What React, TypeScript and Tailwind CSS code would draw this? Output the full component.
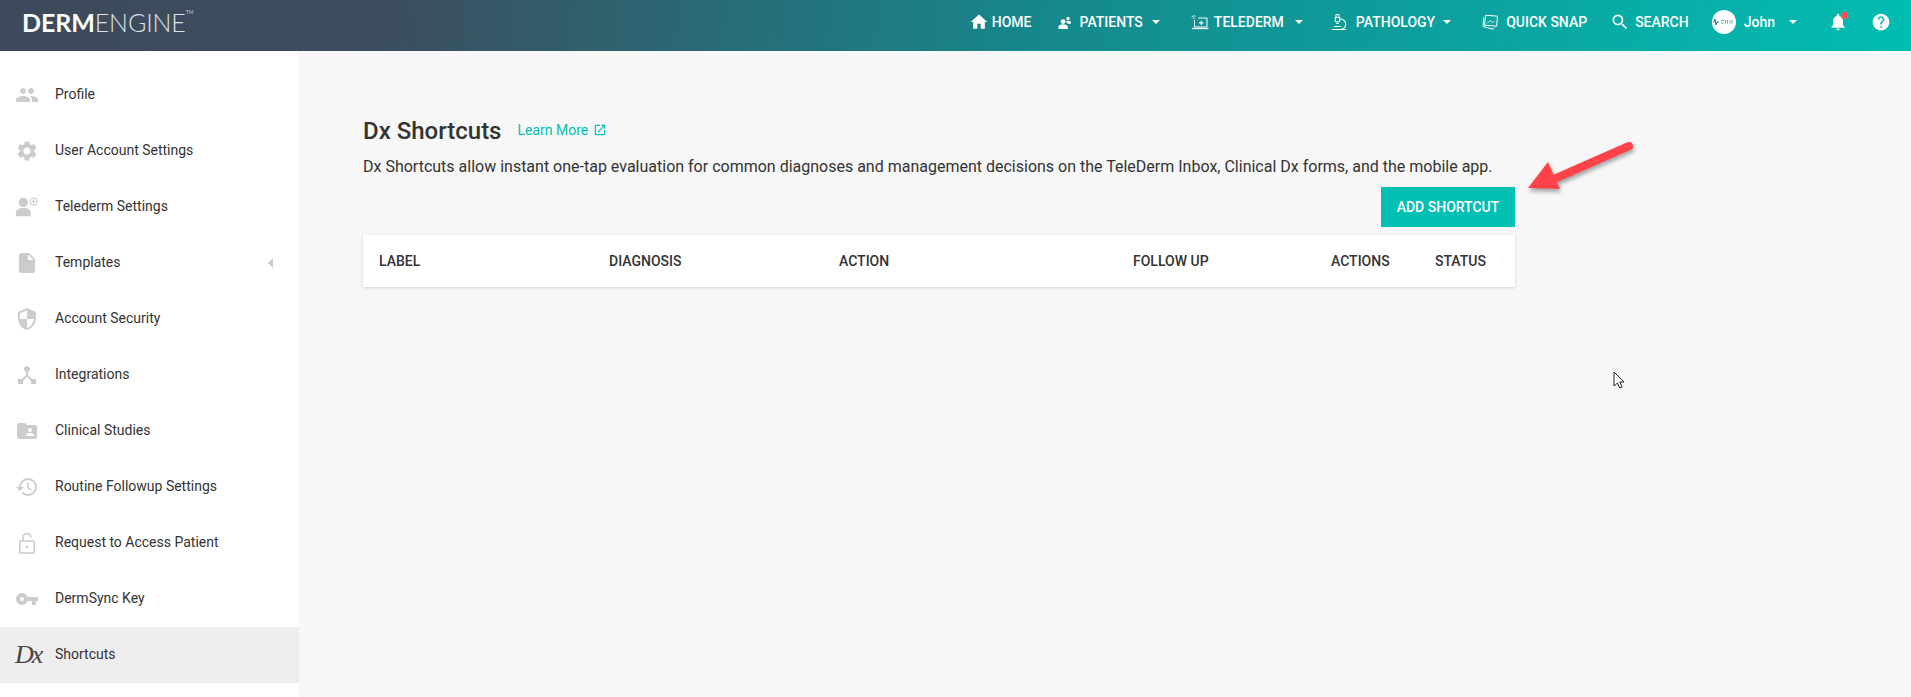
import { Microscope } from "lucide-react";
import {
  MdDeviceHub,
  MdFolderShared,
  MdHelp,
  MdHistory,
  MdHome,
  MdInsertDriveFile,
  MdNotifications,
  MdOpenInNew,
  MdPeople,
  MdSearch,
  MdSecurity,
  MdSettings,
  MdVpnKey,
} from "react-icons/md";

function TeledermSettingsIcon() {
  return (
    <svg viewBox="0 0 26 22" className="w-[26px] h-[22px]" fill="#ccc">
      <circle cx="9" cy="6" r="5" />
      <path d="M1 21v-4c0-3 3-5 8-5s8 2 8 5v4z" />
      <circle cx="20" cy="5" r="3.7" fill="none" stroke="#ccc" strokeWidth="1.1" />
      <path d="M19.400 3h1.200v1.400H22v1.200h-1.400V7h-1.200V5.600H18V4.400h1.400z" />
    </svg>
  );
}

function LockIcon() {
  return (
    <svg viewBox="0 0 24 24" className="w-6 h-6" fill="none" stroke="#ccc" strokeWidth="1.6">
      <path d="M8 10V6.500a4 4 0 0 1 8 0" />
      <rect x="4.800" y="10" width="14.400" height="12" rx="1" />
      <circle cx="12" cy="16" r="1.300" fill="#ccc" stroke="none" />
    </svg>
  );
}

function DxIcon() {
  return (
    <span className="w-6 text-center font-['Liberation_Serif',serif] italic text-[26px] leading-6 tracking-[-2px] text-[#444]">
      Dx
    </span>
  );
}

function PatientsIcon() {
  return (
    <svg viewBox="0 0 14 14" className="w-[13px] h-[13px]" fill="#fff">
      <circle cx="5.500" cy="6" r="2.600" />
      <path d="M0.500 14v-2.400c0-1.600 2.200-2.600 5-2.600s5 1 5 2.600V14z" />
      <circle cx="10.800" cy="2.600" r="1.800" />
      <path d="M9 5.400c.6-.3 1.200-.4 1.900-.4 1.600 0 3 .7 3 1.900V8.400h-3.300C10 7.600 9.500 7.200 9 7z" />
    </svg>
  );
}

function TeledermIcon() {
  return (
    <svg viewBox="0 0 18 16" className="w-[18px] h-4" fill="none" stroke="#fff" strokeWidth="1">
      <path d="M3.500 6v7h12.500V4H7" />
      <path d="M1 14.500h16.500" strokeWidth="1.300" />
      <path d="M9.700 6.700h1.100v1.600h1.600v1.100h-1.600V11H9.700V9.400H8.100V8.300h1.600z" fill="#fff" stroke="none" />
      <path d="M.6 2.800A3.500 3.500 0 0 1 4.500 2.200M1.700 4.600A2 2 0 0 1 3.500 4" strokeWidth=".9" />
    </svg>
  );
}

function PhotosIcon() {
  return (
    <svg viewBox="0 0 16 16" className="w-4 h-4" fill="none" stroke="#fff" strokeWidth="1">
      <path d="M3.500 1.200l12 1-.9 10-12-1z" />
      <path d="M1.800 3.500L1 12.500l10 2.700 1.400-1.500" />
      <path d="M5 9.500l3-3 2.500 2 2-1.500" strokeWidth=".8" />
    </svg>
  );
}

function Avatar() {
  return (
    <span className="relative w-6 h-6 rounded-full bg-white flex items-center justify-center overflow-hidden">
      <svg viewBox="0 0 24 24" className="w-6 h-6" fill="none" stroke="#5fb8ae" strokeWidth="1">
        <path d="M1 12h1l1-3 1 6 1-3h2" stroke="#2f6f70" />
        <path d="M9 10.500h3M9 13h3M13.500 10v3.500M15.500 10v3.500M18 10v3.500M20 10v3.500" />
      </svg>
    </span>
  );
}

function Caret({ className }: { className: string }) {
  return (
    <svg viewBox="0 0 8 4" className={`w-2 h-1 ${className}`} fill="#fff">
      <path d="M0 0h8L4 4z" />
    </svg>
  );
}

function Header() {
  return (
    <header className="h-[51px] pb-[7px] flex items-center text-white bg-[linear-gradient(96deg,#3d4a5c_0%,#3c4d5f_20%,#15898d_55%,#02bdb2_100%)] font-['Roboto',sans-serif]">
      <div className="ml-[22px] flex font-['Lato',sans-serif] text-[25px] leading-none tracking-[-0.1px]">
        <span className="font-bold">DERM</span>
        <span className="font-light text-[#dfe3e6]">ENGINE</span>
        <span className="text-[5px] font-bold text-[#aab]">TM</span>
      </div>
      <nav className="ml-auto mr-5 flex items-center text-sm font-medium">
        <MdHome className="w-5 h-5 mr-[3px]" />
        <span>HOME</span>
        <span className="ml-[27px]"><PatientsIcon /></span>
        <span className="ml-2">PATIENTS</span>
        <Caret className="ml-[9px]" />
        <span className="ml-[31px]"><TeledermIcon /></span>
        <span className="ml-[5px]">TELEDERM</span>
        <Caret className="ml-[11px]" />
        <Microscope className="ml-[27px] w-[18px] h-[18px]" strokeWidth={1.5} />
        <span className="ml-2">PATHOLOGY</span>
        <Caret className="ml-2" />
        <span className="ml-[31px]"><PhotosIcon /></span>
        <span className="ml-2">QUICK SNAP</span>
        <MdSearch className="ml-[23px] w-[20px] h-[20px]" />
        <span className="ml-[5px]">SEARCH</span>
        <span className="ml-[23px]"><Avatar /></span>
        <span className="ml-2">John</span>
        <Caret className="ml-[14px]" />
        <span className="relative ml-[31px]">
          <MdNotifications className="w-[20px] h-[20px]" />
          <span className="absolute top-0 right-0 w-[7px] h-[7px] rounded-full bg-[#ff5252]" />
        </span>
        <MdHelp className="ml-[23px] w-[20px] h-[20px]" />
      </nav>
    </header>
  );
}

const ICON_CLASS = "w-6 h-6 text-[#ccc]";

const SIDEBAR_ITEMS = [
  { label: "Profile", icon: <MdPeople className={ICON_CLASS} /> },
  { label: "User Account Settings", icon: <MdSettings className={ICON_CLASS} /> },
  { label: "Telederm Settings", icon: <TeledermSettingsIcon /> },
  { label: "Templates", icon: <MdInsertDriveFile className={ICON_CLASS} />, arrow: true },
  { label: "Account Security", icon: <MdSecurity className={ICON_CLASS} /> },
  { label: "Integrations", icon: <MdDeviceHub className={ICON_CLASS} /> },
  { label: "Clinical Studies", icon: <MdFolderShared className={ICON_CLASS} /> },
  { label: "Routine Followup Settings", icon: <MdHistory className={ICON_CLASS} /> },
  { label: "Request to Access Patient", icon: <LockIcon /> },
  { label: "DermSync Key", icon: <MdVpnKey className={ICON_CLASS} /> },
  { label: "Shortcuts", icon: <DxIcon />, active: true },
];

function Sidebar() {
  return (
    <aside className="w-[299px] shrink-0 bg-white pt-4">
      {SIDEBAR_ITEMS.map((item) => (
        <div
          key={item.label}
          className={`h-14 flex items-center pl-[15px] pr-[26px] text-sm text-[#333] ${item.active ? "bg-[#eee]" : ""}`}
        >
          <span className="w-6 flex justify-center">{item.icon}</span>
          <span className="ml-4 -mt-[3px]">{item.label}</span>
          {item.arrow && (
            <span className="ml-auto w-0 h-0 border-y-[5px] border-y-transparent border-r-[5px] border-r-[#ccc]" />
          )}
        </div>
      ))}
    </aside>
  );
}

const COLUMNS = [
  { label: "LABEL", width: "w-[230px]" },
  { label: "DIAGNOSIS", width: "w-[230px]" },
  { label: "ACTION", width: "w-[294px]" },
  { label: "FOLLOW UP", width: "w-[198px]" },
  { label: "ACTIONS", width: "w-[104px]" },
  { label: "STATUS", width: "w-[96px]" },
];

function Main() {
  return (
    <main className="relative flex-1 pl-16 pt-[66px]">
      <div className="w-[1152px]">
        <div className="h-7 flex items-center">
          <h1 className="text-2xl font-medium text-[#333]">Dx Shortcuts</h1>
          <a className="ml-4 mt-[-2px] flex items-center text-sm text-[#00bfb3]">
            Learn More
            <MdOpenInNew className="ml-[5px] w-[14px] h-[14px]" />
          </a>
        </div>
        <p className="mt-[11px] h-[22px] text-base leading-[22px] text-[#333]">
          Dx Shortcuts allow instant one-tap evaluation for common diagnoses and management decisions on the TeleDerm Inbox, Clinical Dx forms, and the mobile app.
        </p>
        <div className="mt-[9px] flex justify-end">
          <button className="w-[134px] h-10 bg-[#00bfb3] text-white text-sm font-medium">ADD SHORTCUT</button>
        </div>
        <div className="mt-2 h-[52px] flex items-center bg-white shadow-[0_1px_3px_rgba(0,0,0,0.15)] text-sm font-medium text-[#333]">
          {COLUMNS.map((col) => (
            <div key={col.label} className={`${col.width} pl-4`}>
              {col.label}
            </div>
          ))}
        </div>
      </div>

      {/* annotation arrow drawn on top of the screenshot */}
      <svg
        viewBox="0 0 120 60"
        className="absolute left-[1229px] top-[87px] w-[120px] h-[60px] overflow-visible drop-shadow-[1px_3px_2px_rgba(0,0,0,0.35)]"
      >
        <path d="M101 8L26 41" stroke="#ff4348" strokeWidth="8" strokeLinecap="round" />
        <path d="M0 50L20 24L32 51z" fill="#ff4348" />
      </svg>

      {/* mouse pointer */}
      <svg viewBox="0 0 12 20" className="absolute left-[1314px] top-[320px] w-3 h-5">
        <path
          d="M1 1v14l3.500-3 2.200 5 2.300-1-2.200-5H11z"
          fill="#fff"
          stroke="#222"
          strokeWidth="1"
        />
      </svg>
    </main>
  );
}

export default function App() {
  return (
    <div className="h-[697px] flex flex-col overflow-hidden bg-[#f7f7f7] font-['Roboto',sans-serif]">
      <Header />
      <div className="flex flex-1">
        <Sidebar />
        <Main />
      </div>
    </div>
  );
}
